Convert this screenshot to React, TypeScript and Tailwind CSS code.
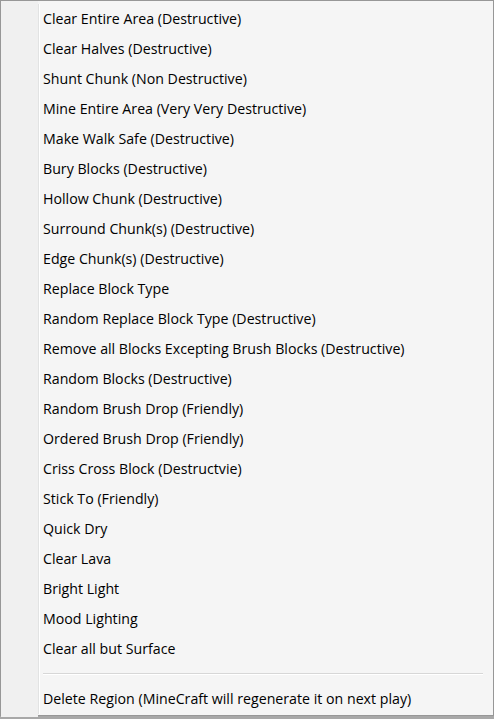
import React from 'react'

const items = [
  'Clear Entire Area (Destructive)',
  'Clear Halves (Destructive)',
  'Shunt Chunk (Non Destructive)',
  'Mine Entire Area (Very Very Destructive)',
  'Make Walk Safe (Destructive)',
  'Bury Blocks (Destructive)',
  'Hollow Chunk (Destructive)',
  'Surround Chunk(s) (Destructive)',
  'Edge Chunk(s) (Destructive)',
  'Replace Block Type',
  'Random Replace Block Type (Destructive)',
  'Remove all Blocks Excepting Brush Blocks (Destructive)',
  'Random Blocks (Destructive)',
  'Random Brush Drop (Friendly)',
  'Ordered Brush Drop (Friendly)',
  'Criss Cross Block (Destructvie)',
  'Stick To (Friendly)',
  'Quick Dry',
  'Clear Lava',
  'Bright Light',
  'Mood Lighting',
  'Clear all but Surface',
]

const MenuItem = ({ label }: { label: string }) => (
  <div className="flex h-[30px] items-center">
    <div className="w-[37px] h-full shrink-0" />
    <div className="w-[2px] h-full shrink-0 border-l border-[#e2e3e3] bg-white" />
    <span className="pl-[3px] text-[#000] whitespace-nowrap">{label}</span>
  </div>
)

export default function App() {
  return (
    <div className="w-[494px] h-[719px] bg-[#a8a8a8] overflow-hidden">
      <div
        className="w-[494px] h-[716px] border border-[#979797] bg-[#f5f5f5] pt-[3px] text-[14.2px] leading-none"
        style={{ fontFamily: '"Segoe UI", "Open Sans", "Noto Sans", sans-serif' }}
      >
        <div className="relative">
          {/* gutter */}
          <div className="absolute left-0 -top-[3px] -bottom-[3px] w-[37px] bg-[#f0f0f0]" />
          <div className="relative">
            {items.map((item) => (
              <MenuItem key={item} label={item} />
            ))}
            {/* separator */}
            <div className="flex h-[20px] items-center">
              <div className="w-[37px] h-full shrink-0" />
              <div className="w-[2px] h-full shrink-0 border-l border-[#e2e3e3] bg-white" />
              <div className="ml-[3px] mr-[10px] flex-1 h-[2px] border-t border-[#d7d7d7] bg-white" />
            </div>
            <MenuItem label="Delete Region (MineCraft will regenerate it on next play)" />
          </div>
        </div>
      </div>
    </div>
  )
}
